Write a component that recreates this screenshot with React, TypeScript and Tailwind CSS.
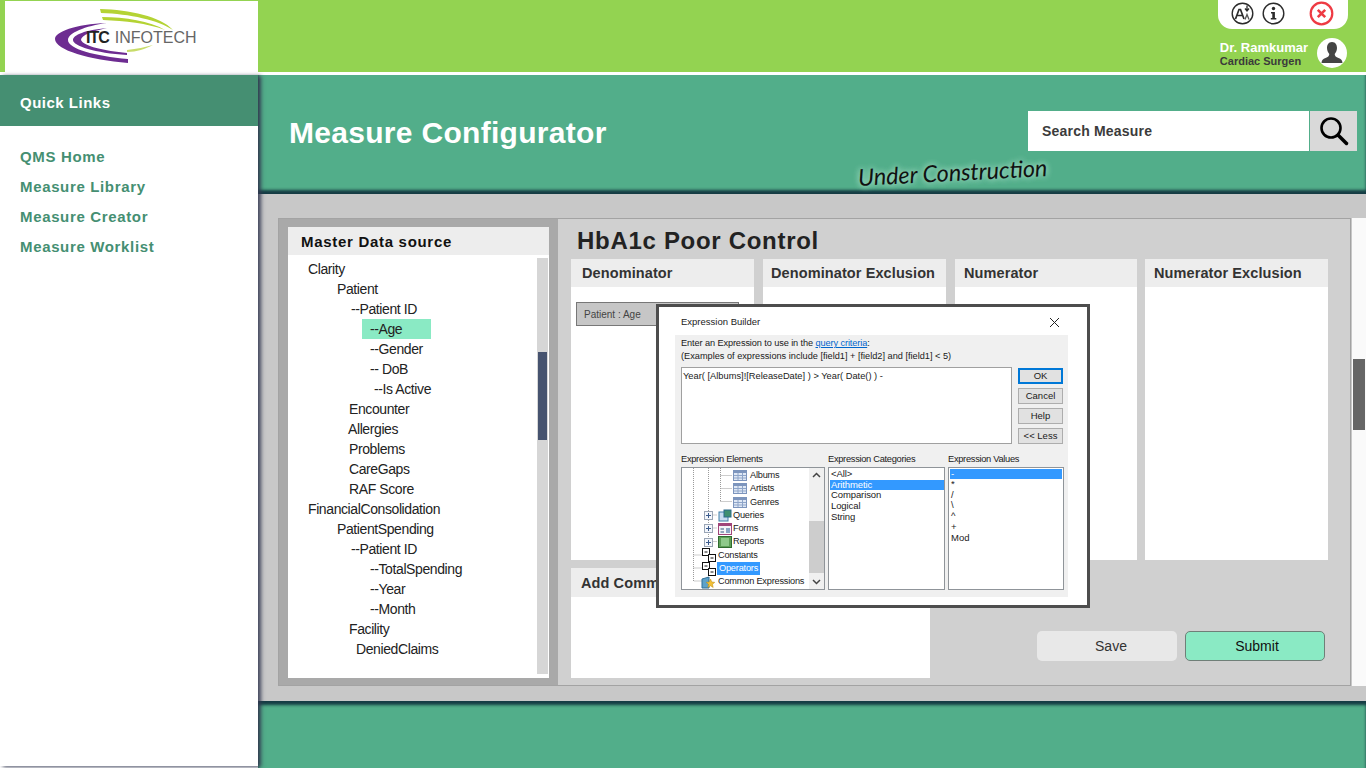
const font = "font-['Liberation_Sans',Arial,sans-serif]";

const links = ["QMS Home", "Measure Library", "Measure Creator", "Measure Worklist"];

const tree = [
  { label: "Clarity", cls: "pl-[20px]" },
  { label: "Patient", cls: "pl-[49px]" },
  { label: "--Patient ID", cls: "pl-[63px]" },
  { label: "--Age", cls: "pl-[82px]", active: true },
  { label: "--Gender", cls: "pl-[82px]" },
  { label: "-- DoB", cls: "pl-[82px]" },
  { label: "--Is Active", cls: "pl-[86px]" },
  { label: "Encounter", cls: "pl-[61px]" },
  { label: "Allergies", cls: "pl-[60px]" },
  { label: "Problems", cls: "pl-[61px]" },
  { label: "CareGaps", cls: "pl-[61px]" },
  { label: "RAF Score", cls: "pl-[61px]" },
  { label: "FinancialConsolidation", cls: "pl-[20px]" },
  { label: "PatientSpending", cls: "pl-[49px]" },
  { label: "--Patient ID", cls: "pl-[63px]" },
  { label: "--TotalSpending", cls: "pl-[82px]" },
  { label: "--Year", cls: "pl-[82px]" },
  { label: "--Month", cls: "pl-[82px]" },
  { label: "Facility", cls: "pl-[61px]" },
  { label: "DeniedClaims", cls: "pl-[68px]" },
];

function Logo() {
  return (
    <div className="relative w-[150px] h-[60px]">
      <svg className="absolute inset-0" width="150" height="60" viewBox="0 0 150 60">
        <path d="M45 1 C75 2 105 8 118 22 C103 12 75 6 46 5 Z" fill="#b4d334" />
        <path d="M47 9 C70 9 95 13 110 22 C92 15 70 13 48 12 Z" fill="#b4d334" />
        <path d="M72 42 C82 41 90 39 98 37 C90 41 82 44 72 44 Z" fill="#c8dc6a" />
        <path d="M52 15 C20 16 0 24 0 31 C0 42 35 52 73 55 L73 51 C40 48 13 41 13 32 C13 25 30 18 52 15 Z" fill="#6d2c91" />
        <path d="M52 20 C30 22 18 27 18 32 C18 38 40 45 72 47 L72 45 C50 43 28 38 26 32 C26 27 38 23 52 20 Z" fill="#6d2c91" />
      </svg>
      <div className={`absolute left-[31px] top-[20px] flex items-baseline leading-[20px] whitespace-nowrap ${font}`}>
        <span className="text-[16px] tracking-[-1px] font-bold text-[#222]">ITC</span>
        <span className="ml-[6px] text-[16px] text-[#666]">INFOTECH</span>
      </div>
    </div>
  );
}

function TopIcons() {
  return (
    <div className="absolute right-[18px] top-0 w-[130px] h-[29px] bg-white rounded-b-[14px]">
      <svg className="absolute left-[13px] top-[2px]" width="23" height="23" viewBox="0 0 23 23">
        <circle cx="11.5" cy="11.5" r="10.3" fill="none" stroke="#2b2b2b" strokeWidth="1.4" />
        <path d="M4.5 17 L8 7.5 L9.5 7.5 L13 17 M6 13.5 H11.5" fill="none" stroke="#2b2b2b" strokeWidth="1.7" />
        <path d="M16 3.5 V8 M14 6.5 L16 9 L18 6.5" fill="none" stroke="#2b2b2b" strokeWidth="1.3" />
        <path d="M14 17.5 L16 12.5 L18 17.5" fill="none" stroke="#555" strokeWidth="1.3" />
      </svg>
      <svg className="absolute left-[44px] top-[2px]" width="23" height="23" viewBox="0 0 23 23">
        <circle cx="11.5" cy="11.5" r="10.3" fill="none" stroke="#2b2b2b" strokeWidth="1.4" />
        <circle cx="11.5" cy="6.5" r="1.7" fill="#2b2b2b" />
        <path d="M9 10 H12.9 V16 H14.3 V17.5 H8.8 V16 H10.3 V11.5 H9 Z" fill="#2b2b2b" />
      </svg>
      <svg className="absolute left-[91px] top-[1px]" width="25" height="25" viewBox="0 0 25 25">
        <circle cx="12.5" cy="12.5" r="10.8" fill="#fff" stroke="#ee3a43" strokeWidth="2.2" />
        <path d="M8.8 8.8 L16.2 16.2 M16.2 8.8 L8.8 16.2" stroke="#ee3a43" strokeWidth="2.6" />
      </svg>
    </div>
  );
}

function Avatar() {
  return (
    <svg width="30" height="30" viewBox="0 0 30 30">
      <circle cx="15" cy="15" r="15" fill="#fff" />
      <path d="M15 4 C11.5 4 10 7 10 10 C10 13 11.5 15 12.3 16 C12.3 18 11 19 8.5 20 C6 21 4.7 22 4.5 25 H25.5 C25.3 22 24 21 21.5 20 C19 19 17.7 18 17.7 16 C18.5 15 20 13 20 10 C20 7 18.5 4 15 4 Z" fill="#444" />
    </svg>
  );
}

function Column({ title, cls, titleCls, children }: { title: string; cls: string; titleCls: string; children?: React.ReactNode }) {
  return (
    <div className={`flex-none h-[301px] bg-white ${cls}`}>
      <div className={`h-[28px] bg-[#ededed] text-[14.5px] leading-[29px] font-bold tracking-[0.1px] text-[#333] whitespace-nowrap ${titleCls} ${font}`}>
        {title}
      </div>
      {children}
    </div>
  );
}

function TableIcon() {
  return (
    <svg width="14" height="11" viewBox="0 0 14 11">
      <rect x="0.5" y="0.5" width="13" height="10" fill="#dfe8f5" stroke="#7d95bd" />
      <rect x="0.5" y="0.5" width="13" height="2.5" fill="#7d95bd" />
      <path d="M5 3 V10 M9.5 3 V10 M1 5.5 H13 M1 8 H13" stroke="#8ea5c9" strokeWidth="1" />
    </svg>
  );
}

function PlusBox() {
  return (
    <svg width="9" height="9" viewBox="0 0 9 9">
      <rect x="0.5" y="0.5" width="8" height="8" fill="#f3f6fb" stroke="#9aa5b5" />
      <path d="M2 4.5 H7 M4.5 2 V7" stroke="#3a5a8c" />
    </svg>
  );
}

function OperatorIcon() {
  return (
    <svg width="14" height="14" viewBox="0 0 14 14">
      <rect x="0.5" y="0.5" width="7" height="7" fill="#fff" stroke="#111" />
      <rect x="6.5" y="6.5" width="7" height="7" fill="#fff" stroke="#111" />
      <path d="M2.5 4 H5.5 M8.5 10 H11.5" stroke="#111" />
    </svg>
  );
}

function ElementsTree() {
  return (
    <div className="relative flex-none w-[144px] h-[123px] bg-white border border-[#8f9499] overflow-hidden">
      <svg className="absolute left-0 top-0" width="128" height="121" viewBox="0 0 128 121">
        <path d="M11.5 0 V113 H20 M26.5 0 V74 M38.5 0 V33 M38.5 7.5 H50 M38.5 20.5 H50 M38.5 33.5 H50 M26.5 47 H35 M26.5 60 H35 M26.5 73.5 H35 M11.5 87 H20 M11.5 100 H20" fill="none" stroke="#9a9a9a" strokeDasharray="1 1" />
      </svg>
      <div className={`absolute left-0 top-[1px] w-[128px] text-[9.2px] leading-[13.3px] tracking-[-0.2px] text-[#1a1a1a] ${font}`}>
        {["Albums", "Artists", "Genres"].map((t) => (
          <div key={t} className="h-[13.3px] flex items-center pl-[51px] gap-[3px]">
            <TableIcon />
            <span>{t}</span>
          </div>
        ))}
        <div className="h-[13.3px] flex items-center pl-[22px] gap-[5px]">
          <PlusBox />
          <svg width="14" height="13" viewBox="0 0 14 13">
            <rect x="1" y="3" width="9" height="9" fill="#c9dcf0" stroke="#3f7fa8" />
            <rect x="6" y="1" width="7" height="7" fill="#3f8f6f" stroke="#2a6a8c" />
          </svg>
          <span className="-ml-[4px]">Queries</span>
        </div>
        <div className="h-[13.3px] flex items-center pl-[22px] gap-[5px]">
          <PlusBox />
          <svg width="14" height="12" viewBox="0 0 14 12">
            <rect x="0.5" y="0.5" width="13" height="11" fill="#f4f4f8" stroke="#a0457a" />
            <rect x="0.5" y="0.5" width="13" height="2.5" fill="#a0457a" />
            <path d="M2.5 6 H6 M2.5 9 H6" stroke="#33557f" />
            <rect x="8" y="5" width="4" height="5" fill="#8aa5c5" />
          </svg>
          <span className="-ml-[4px]">Forms</span>
        </div>
        <div className="h-[13.3px] flex items-center pl-[22px] gap-[5px]">
          <PlusBox />
          <svg width="14" height="12" viewBox="0 0 14 12">
            <rect x="0.5" y="0.5" width="13" height="11" fill="#5d9f57" stroke="#2f6b2f" />
            <rect x="3" y="2" width="8" height="8" fill="#8ec98a" />
          </svg>
          <span className="-ml-[4px]">Reports</span>
        </div>
        <div className="h-[13.3px] flex items-center pl-[20px] gap-[2px]">
          <OperatorIcon />
          <span>Constants</span>
        </div>
        <div className="h-[13.3px] flex items-center pl-[20px] gap-[1px]">
          <OperatorIcon />
          <span className="bg-[#3399ff] text-white px-[2px]">Operators</span>
        </div>
        <div className="h-[13.3px] flex items-center pl-[19px] gap-[3px] whitespace-nowrap">
          <svg width="14" height="14" viewBox="0 0 14 14">
            <path d="M1 4 L8 2 V13 H1 Z" fill="#5ea2c9" stroke="#2f6f99" />
            <path d="M9.5 4 L10.8 7 L13.8 7.3 L11.5 9.3 L12.2 12.5 L9.5 10.8 L6.8 12.5 L7.5 9.3 L5.2 7.3 L8.2 7 Z" fill="#f2c037" stroke="#b98a12" strokeWidth="0.5" />
          </svg>
          <span>Common Expressions</span>
        </div>
      </div>
      <div className="absolute right-0 top-0 w-[15px] h-full bg-[#f0f0f0] flex flex-col items-center justify-between">
        <svg className="mt-[4px]" width="9" height="6" viewBox="0 0 9 6">
          <path d="M1 5 L4.5 1.5 L8 5" fill="none" stroke="#444" strokeWidth="1.5" />
        </svg>
        <div className="w-full h-[52px] mt-[36px] bg-[#cdcdcd]" />
        <svg className="mb-[4px]" width="9" height="6" viewBox="0 0 9 6">
          <path d="M1 1 L4.5 4.5 L8 1" fill="none" stroke="#444" strokeWidth="1.5" />
        </svg>
      </div>
    </div>
  );
}

function ExpressionBuilder() {
  const btn = "w-[45px] h-[16px] bg-[#e1e1e1] text-center text-[9.5px] text-[#1a1a1a]";
  const plain = `${btn} border border-[#adadad] leading-[14px]`;
  return (
    <div className={`absolute left-[656px] top-[304px] w-[434px] h-[304px] bg-white border-[3px] border-[#4d4d4d] ${font}`}>
      <div className="h-[28px] flex items-center justify-between pl-[22px] pr-[26px] text-[9.5px] text-[#222]">
        <span className="mt-[2px]">Expression Builder</span>
        <svg className="mt-[2px]" width="13" height="13" viewBox="0 0 13 13">
          <path d="M2 2 L11 11 M11 2 L2 11" stroke="#222" strokeWidth="1" />
        </svg>
      </div>
      <div className="ml-[16px] w-[393px] h-[262px] bg-[#f0f0f0] pl-[6px] pt-[2px] text-[#1a1a1a]">
        <div className="text-[9.2px] leading-[13px] tracking-[-0.1px] whitespace-nowrap">
          Enter an Expression to use in the <span className="text-[#0066cc] underline">query criteria</span>:
        </div>
        <div className="text-[9.2px] leading-[13px] whitespace-nowrap">
          (Examples of expressions include [field1] + [field2] and [field1] &lt; 5)
        </div>
        <div className="mt-[4px] flex gap-[6px]">
          <div className="w-[331px] h-[77px] bg-white border border-[#a0a0a0] px-[1px] pt-[2px] text-[9.3px] leading-[12px] whitespace-nowrap">
            Year( [Albums]![ReleaseDate] ) &gt; Year( Date() ) -
          </div>
          <div className="pt-[1px] flex flex-col gap-[4px]">
            <div className={`${btn} border-2 border-[#0078d7] leading-[12px]`}>OK</div>
            <div className={plain}>Cancel</div>
            <div className={plain}>Help</div>
            <div className={plain}>&lt;&lt; Less</div>
          </div>
        </div>
        <div className="mt-[9px] flex text-[9.3px] leading-[12px] tracking-[-0.3px]">
          <span className="w-[147px]">Expression Elements</span>
          <span className="w-[120px]">Expression Categories</span>
          <span>Expression Values</span>
        </div>
        <div className="mt-[2px] flex gap-[3px]">
          <ElementsTree />
          <div className="w-[117px] h-[123px] bg-white border border-[#8f9499] pl-[2px] pt-[1px] text-[9.5px] leading-[10.7px] tracking-[-0.1px]">
            <div>&lt;All&gt;</div>
            <div className="-ml-[1px] pl-[1px] bg-[#3399ff] text-white">Arithmetic</div>
            <div>Comparison</div>
            <div>Logical</div>
            <div>String</div>
          </div>
          <div className="w-[116px] h-[123px] bg-white border border-[#8f9499] pl-[1px] pt-[1px] pr-[1px] text-[9.5px] leading-[10.7px]">
            <div className="h-[10px] pl-[1px] bg-[#3399ff] text-white">-</div>
            <div className="pl-[1px]">*</div>
            <div className="pl-[1px]">/</div>
            <div className="pl-[1px]">\</div>
            <div className="pl-[1px]">^</div>
            <div className="pl-[1px]">+</div>
            <div className="pl-[1px]">Mod</div>
          </div>
        </div>
      </div>
    </div>
  );
}

export default function App() {
  return (
    <div className={`relative w-[1366px] h-[768px] overflow-hidden bg-white ${font}`}>
      {/* top bar */}
      <div className="relative h-[72px] bg-[#93d351] pl-[5px] pt-[1px]">
        <div className="w-[253px] h-[71px] bg-white pl-[50px] pt-[7px]">
          <Logo />
        </div>
        <TopIcons />
        <div className="absolute right-[19px] top-[38px] flex items-center gap-[9px]">
          <div className="font-bold whitespace-nowrap">
            <div className="text-[13px] leading-[15px] text-white">Dr. Ramkumar</div>
            <div className="text-[11px] leading-[12px] text-[#3b3b3b]">Cardiac Surgen</div>
          </div>
          <Avatar />
        </div>
      </div>

      <div className="mt-[3px] flex h-[693px]">
        {/* sidebar */}
        <aside className="relative z-20 w-[258px] h-[691px] bg-white shadow-[3px_1px_4px_rgba(50,55,80,0.9)]">
          <div className="h-[51px] bg-[#458f72] pl-[20px] text-[15px] leading-[56px] font-bold tracking-[0.5px] text-white">
            Quick Links
          </div>
          <nav className="pt-[16px] pl-[20px]">
            {links.map((l) => (
              <div key={l} className="h-[30px] text-[15px] leading-[30px] font-bold tracking-[0.65px] text-[#458f72]">
                {l}
              </div>
            ))}
          </nav>
        </aside>

        <main className="flex-1 flex flex-col">
          {/* page header */}
          <div className="relative h-[119px] bg-[#52ae8a] flex justify-between shadow-[inset_0_-4px_3px_rgba(10,40,55,0.85)]">
            <h1 className="pl-[31px] pt-[40px] text-[30px] leading-[36px] font-bold tracking-[0.3px] text-white whitespace-nowrap">
              Measure Configurator
            </h1>
            <div className="mt-[36px] mr-[9px] flex h-[40px]">
              <div className="w-[281px] bg-white pl-[14px] text-[14px] leading-[41px] font-bold tracking-[0.2px] text-[#3b3b3b]">
                Search Measure
              </div>
              <div className="ml-[1px] w-[47px] bg-[#d9d9d9] flex items-center justify-center">
                <svg width="30" height="30" viewBox="0 0 30 30">
                  <circle cx="12" cy="12" r="9.5" fill="none" stroke="#000" strokeWidth="2.6" />
                  <path d="M19 19 L27.5 27.5" stroke="#000" strokeWidth="3.5" strokeLinecap="round" />
                </svg>
              </div>
            </div>
          </div>

          {/* content */}
          <div className="h-[507px] bg-[#c8c8c8] pt-[24px] pl-[20px] flex">
            <div className="w-[1073px] h-[468px] bg-[#d0d0d0] border border-[#a3a3a3] flex">
              <div className="w-[279px] h-full bg-[#a9a9a9] pt-[8px] pl-[9px]">
                <div className="w-[261px] h-[451px] bg-white">
                  <div className="h-[28px] bg-[#ededed] pl-[13px] text-[15px] leading-[30px] font-bold tracking-[0.7px] text-[#111]">
                    Master Data source
                  </div>
                  <div className="relative pt-[4px] text-[14px] leading-[20px] tracking-[-0.4px] text-[#222]">
                    {tree.map((row, i) => (
                      <div key={i} className={`h-[20px] whitespace-nowrap ${row.cls}`}>
                        <span className={row.active ? "inline-block -ml-[8px] w-[69px] pl-[8px] bg-[#8aeac4]" : ""}>
                          {row.label}
                        </span>
                      </div>
                    ))}
                    <div className="absolute right-[1px] top-[3px] w-[11px] h-[416px] bg-[#d6d6d6] pt-[94px]">
                      <div className="mx-auto w-[9px] h-[88px] bg-[#46536f]" />
                    </div>
                  </div>
                </div>
              </div>

              <div className="flex-1 pl-[13px]">
                <h2 className="pl-[6px] pt-[6px] h-[40px] text-[24px] leading-[32px] font-bold tracking-[0.7px] text-[#222] whitespace-nowrap">
                  HbA1c Poor Control
                </h2>
                <div className="flex">
                  <Column title="Denominator" cls="w-[183px]" titleCls="pl-[11px]">
                    <div className="ml-[5px] mt-[15px] w-[163px] h-[24px] bg-[#c6c6c6] border border-[#777] pl-[7px] text-[10px] leading-[24px] text-[#444]">
                      Patient : Age
                    </div>
                  </Column>
                  <Column title="Denominator Exclusion" cls="ml-[9px] w-[183px]" titleCls="pl-[8px]" />
                  <Column title="Numerator" cls="ml-[9px] w-[182px]" titleCls="pl-[9px]" />
                  <Column title="Numerator Exclusion" cls="ml-[8px] w-[183px]" titleCls="pl-[9px]" />
                </div>
                <div className="mt-[8px] flex">
                  <div className="w-[359px] h-[110px] bg-white">
                    <div className="h-[29px] bg-[#ededed] pl-[10px] text-[14.5px] leading-[30px] font-bold tracking-[0.1px] text-[#333]">
                      Add Comment
                    </div>
                  </div>
                  <div className="ml-[107px] mt-[63px] flex gap-[8px] text-[14px]">
                    <div className="w-[140px] h-[30px] rounded-[5px] bg-[#e8e8e8] pl-[8px] text-center leading-[30px] text-[#333]">Save</div>
                    <div className="w-[140px] h-[30px] rounded-[5px] bg-[#8aeac4] border border-[#6f7f78] pl-[4px] text-center leading-[28px] text-[#111]">Submit</div>
                  </div>
                </div>
              </div>
            </div>
            <div className="ml-[1px] w-[14px] h-[468px] bg-[#fafafa] pt-[141px]">
              <div className="ml-[1px] w-[12px] h-[71px] bg-[#666]" />
            </div>
          </div>

          {/* footer */}
          <div className="flex-1 bg-[#52ae8a] shadow-[inset_0_4px_3px_rgba(10,40,55,0.85)]" />
        </main>
      </div>

      <div className="absolute z-30 left-[858px] top-[157px] -rotate-3 font-['Lato',sans-serif] italic text-[23.3px] leading-[30px] text-[#111] whitespace-nowrap [text-shadow:0_0_6px_#a5dcc5,0_0_6px_#a5dcc5]">
        Under Construction
      </div>

      <div className="absolute inset-0 z-40 pointer-events-none">
        <ExpressionBuilder />
      </div>
    </div>
  );
}
